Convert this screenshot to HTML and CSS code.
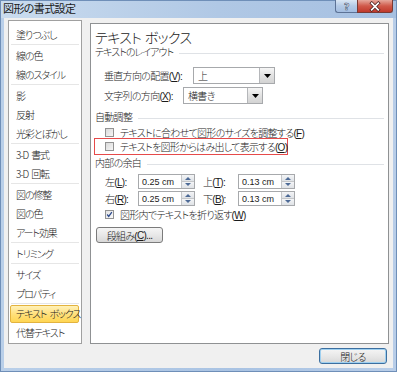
FILE: index.html
```html
<!DOCTYPE html>
<html lang="ja">
<head>
<meta charset="utf-8">
<title>図形の書式設定</title>
<link rel="stylesheet" href="styles.css">
</head>
<body>
<div class="win">
  <div class="titlebar">
    <span class="title-text">図形の書式設定</span>
    <div class="caption-btns">
      <div class="cap help">
        <svg width="22" height="13" viewBox="0 0 22 13"><text x="11" y="10.5" text-anchor="middle" class="q">?</text></svg>
      </div>
      <div class="cap close">
        <svg width="36" height="13" viewBox="0 0 36 13"><path d="M14.5 3 L21.5 10 M21.5 3 L14.5 10" stroke="#4a2020" stroke-width="3.4" stroke-linecap="square"/><path d="M14.5 3 L21.5 10 M21.5 3 L14.5 10" stroke="#ffffff" stroke-width="1.8" stroke-linecap="square"/></svg>
      </div>
    </div>
  </div>
  <div class="client">
    <div class="main">
      <div class="nav">
        <div class="item">塗りつぶし</div>
        <div class="sep"></div>
        <div class="item">線の色</div>
        <div class="item">線のスタイル</div>
        <div class="sep"></div>
        <div class="item">影</div>
        <div class="item">反射</div>
        <div class="item">光彩とぼかし</div>
        <div class="sep"></div>
        <div class="item">3-D 書式</div>
        <div class="item">3-D 回転</div>
        <div class="sep"></div>
        <div class="item">図の修整</div>
        <div class="item">図の色</div>
        <div class="item">アート効果</div>
        <div class="sep"></div>
        <div class="item">トリミング</div>
        <div class="sep"></div>
        <div class="item">サイズ</div>
        <div class="item">プロパティ</div>
        <div class="sep"></div>
        <div class="item selected">テキスト ボックス</div>
        <div class="item">代替テキスト</div>
      </div>
      <div class="panel">
        <div class="heading">テキスト ボックス</div>
        <div class="section"><span class="kana">テキストのレイアウト</span><div class="rule"></div></div>
        <div class="row sel-row1">
          <span class="lbl lbl-v">垂直方向の配置(<u>V</u>):</span>
          <div class="select sel1"><span class="val">上</span><div class="drop"><svg width="7" height="4" viewBox="0 0 7 4"><path d="M0 0 H7 L3.5 4 Z" fill="#000"/></svg></div></div>
        </div>
        <div class="row sel-row2">
          <span class="lbl lbl-x">文字列の方向(<u>X</u>):</span>
          <div class="select sel2"><span class="val">横書き</span><div class="drop"><svg width="7" height="4" viewBox="0 0 7 4"><path d="M0 0 H7 L3.5 4 Z" fill="#000"/></svg></div></div>
        </div>
        <div class="section sec2"><span>自動調整</span><div class="rule"></div></div>
        <div class="check-row cb1"><span class="box"></span><span>テキストに合わせて図形のサイズを調整する(<u>F</u>)</span></div>
        <div class="check-row redbox"><span class="box"></span><span>テキストを図形からはみ出して表示する(<u>O</u>)</span></div>
        <div class="section sec3"><span>内部の余白</span><div class="rule"></div></div>
        <div class="row spin-row1">
          <span class="lbl lbl-a">左(<u>L</u>):</span>
          <div class="spin"><span class="val">0.25 cm</span><div class="spin-btns"><div class="up"></div><div class="down"></div></div></div>
          <span class="lbl lbl-b">上(<u>T</u>):</span>
          <div class="spin"><span class="val">0.13 cm</span><div class="spin-btns"><div class="up"></div><div class="down"></div></div></div>
        </div>
        <div class="row spin-row2">
          <span class="lbl lbl-a">右(<u>R</u>):</span>
          <div class="spin"><span class="val">0.25 cm</span><div class="spin-btns"><div class="up"></div><div class="down"></div></div></div>
          <span class="lbl lbl-b">下(<u>B</u>):</span>
          <div class="spin"><span class="val">0.13 cm</span><div class="spin-btns"><div class="up"></div><div class="down"></div></div></div>
        </div>
        <div class="check-row cb3"><span class="box checked"><svg width="9" height="9" viewBox="0 0 9 9"><path d="M1.5 4.5 L3.5 7 L7.5 1.5" fill="none" stroke="#2c4a8c" stroke-width="1.6"/></svg></span><span>図形内でテキストを折り返す(<u>W</u>)</span></div>
        <div class="btn cols-btn">段組み(<u>C</u>)...</div>
      </div>
    </div>
    <div class="footer">
      <div class="btn close-btn">閉じる</div>
    </div>
  </div>
</div>
</body>
</html>
```
FILE: styles.css
```css
* { box-sizing: border-box; }
html, body { margin: 0; padding: 0; }
body {
  width: 397px;
  height: 372px;
  overflow: hidden;
  font-family: "Liberation Sans", "Noto Sans CJK JP", sans-serif;
  font-size: 10px;
  font-weight: 300;
  letter-spacing: -0.7px;
  color: #1a1a1a;
  font-feature-settings: "palt";
}
u { text-decoration-thickness: 1px; text-underline-offset: 1px; }
.win {
  width: 397px;
  height: 372px;
  background: linear-gradient(to right, #b9cfe9, #a9c3e3 60%, #b8cde8);
  border: 1px solid #6f8fb8;
  display: flex;
  flex-direction: column;
}
.titlebar {
  height: 17px;
  display: flex;
  justify-content: space-between;
  align-items: flex-start;
  background: linear-gradient(to right, #cadcef, #b0c8e5 55%, #a6c0e1);
}
.title-text {
  font-size: 11px;
  line-height: 15px;
  padding-left: 2px;
  padding-top: 1px;
  letter-spacing: -0.6px;
  font-weight: 400;
  color: #1a1a1a;
}
.caption-btns {
  display: flex;
  margin-right: 3px;
  margin-top: -1px;
}
.cap {
  height: 13px;
  border: 1px solid #5d7396;
  border-top: none;
  display: flex;
}
.cap.help {
  width: 22px;
  border-radius: 0 0 0 3px;
  border-right: none;
  background: linear-gradient(#dbe7f4, #b4cae6 50%, #a3bde0);
}
.cap.close {
  width: 36px;
  border-radius: 0 0 3px 0;
  background: linear-gradient(#e6a89c, #d0594a 50%, #c0392b);
  border-color: #7a3a34;
}
.q {
  font-family: "DejaVu Sans", sans-serif;
  font-size: 10px;
  font-weight: bold;
  fill: #ffffff;
  stroke: #3d4f6e;
  stroke-width: 0.6;
}
.client {
  flex: 1;
  margin: 0 3px 3px 3px;
  background: #f0f0f0;
  padding: 2px 4px 0 4px;
  display: flex;
  flex-direction: column;
}
.main {
  display: flex;
  gap: 8px;
  height: 324px;
}
.nav {
  width: 74px;
  height: 324px;
  background: #fff;
  border: 1px solid #a0a0a0;
  padding-top: 4px;
  font-family: "Noto Sans CJK JP", sans-serif;
  letter-spacing: -1.1px;
  word-spacing: 2px;
}
.item {
  height: 19px;
  line-height: 19px;
  padding-left: 7px;
  white-space: nowrap;
}
.item.selected {
  margin: 0 2px 0 1px;
  height: 18px;
  line-height: 16px;
  padding-left: 5px;
  border: 1px solid #e3b33e;
  border-radius: 2px;
  background: linear-gradient(#fff1b8, #ffe07c 50%, #ffd653);
}
.sep {
  height: 1px;
  margin: 0 2px 1px 2px;
  background: #e6e6e6;
}
.panel {
  flex: 1;
  margin-top: 3px;
  height: 321px;
  background: #fff;
  border: 1px solid #8f9193;
  padding: 5px 0 0 0;
  display: flex;
  flex-direction: column;
}
.heading {
  height: 18px;
  line-height: 18px;
  font-size: 14px;
  letter-spacing: -0.6px;
  padding-left: 4px;
}
.section {
  height: 12px;
  line-height: 12px;
  display: flex;
  align-items: center;
  padding-left: 4px;
  white-space: nowrap;
}
.section .kana { letter-spacing: -1px; }
.rule {
  flex: 1;
  height: 1px;
  background: #dfe2e6;
  margin: 0 4px 0 6px;
}
.row {
  display: flex;
  align-items: center;
  padding-left: 13px;
  white-space: nowrap;
}
.sel-row1 { margin-top: 8px; height: 17px; }
.sel-row2 { margin-top: 3px; height: 17px; }
.lbl-v { width: 89px; }
.lbl-x { width: 79px; }
.select {
  height: 17px;
  border: 1px solid #a7a9ac;
  display: flex;
  align-items: center;
  justify-content: space-between;
  background: #fff;
}
.sel1 { width: 82px; }
.sel2 { width: 80px; }
.select .val { padding-left: 4px; color: #1a1a1a; }
.drop {
  width: 15px;
  height: 15px;
  border-left: 1px solid #b5b7ba;
  background: linear-gradient(#f6f6f6, #e2e2e2 50%, #d3d3d3);
  display: flex;
  align-items: center;
  justify-content: center;
}
.sec2 { margin-top: 8px; }
.check-row {
  display: flex;
  align-items: center;
  gap: 6px;
  white-space: nowrap;
}
.box {
  width: 9px;
  height: 9px;
  border: 1px solid #939393;
  background: linear-gradient(135deg, #dadada, #f6f6f6);
  display: inline-flex;
  align-items: center;
  justify-content: center;
  flex: none;
}
.box.checked { background: linear-gradient(135deg, #e2e2e2, #fbfbfb); }
.box svg { display: block; }
.cb1 { margin-top: 1px; height: 14px; padding-left: 14px; }
.redbox {
  margin-top: -1px;
  margin-left: 3px;
  width: 194px;
  height: 17px;
  border: 1px solid #e64a4a;
  padding-left: 10px;
}
.sec3 { margin-top: 3px; }
.spin-row1 { margin-top: 4px; height: 15px; padding-left: 14px; }
.spin-row2 { margin-top: 2px; height: 15px; padding-left: 14px; }
.lbl-a { width: 33px; }
.lbl-b { width: 35px; margin-left: 8px; }
.spin {
  width: 57px;
  height: 15px;
  border: 1px solid #a7a9ac;
  display: flex;
  justify-content: space-between;
  align-items: center;
}
.spin .val { padding-left: 3px; font-size: 9px; letter-spacing: 0; font-weight: 400; }
.spin-btns {
  width: 13px;
  height: 13px;
  display: flex;
  flex-direction: column;
  border-left: 1px solid #c4c6c9;
}
.spin-btns .up, .spin-btns .down {
  flex: 1;
  position: relative;
  background: linear-gradient(#f4f5f7, #dfe2e6);
}
.spin-btns .up { border-bottom: 1px solid #c4c6c9; }
.spin-btns .up::after, .spin-btns .down::after {
  content: "";
  position: absolute;
  left: 3px;
  width: 0;
  height: 0;
  border-left: 3px solid transparent;
  border-right: 3px solid transparent;
}
.spin-btns .up::after { top: 2px; border-bottom: 3px solid #4d6a96; }
.spin-btns .down::after { top: 1px; border-top: 3px solid #4d6a96; }
.cb3 { margin-top: 1px; height: 14px; padding-left: 14px; }
.btn {
  display: flex;
  align-items: center;
  justify-content: center;
  height: 16px;
  border: 1px solid #7b7b7b;
  border-radius: 3px;
  background: linear-gradient(#f5f5f5, #e8e8e8 50%, #d8d8d8);
  white-space: nowrap;
}
.cols-btn {
  width: 67px;
  margin-top: 6px;
  margin-left: 5px;
}
.footer {
  display: flex;
  justify-content: flex-end;
  padding-top: 4px;
  padding-right: 2px;
}
.close-btn {
  width: 68px;
  border-color: #3c6fa0;
  box-shadow: inset 0 0 0 1px #9fd0f0;
}
```
